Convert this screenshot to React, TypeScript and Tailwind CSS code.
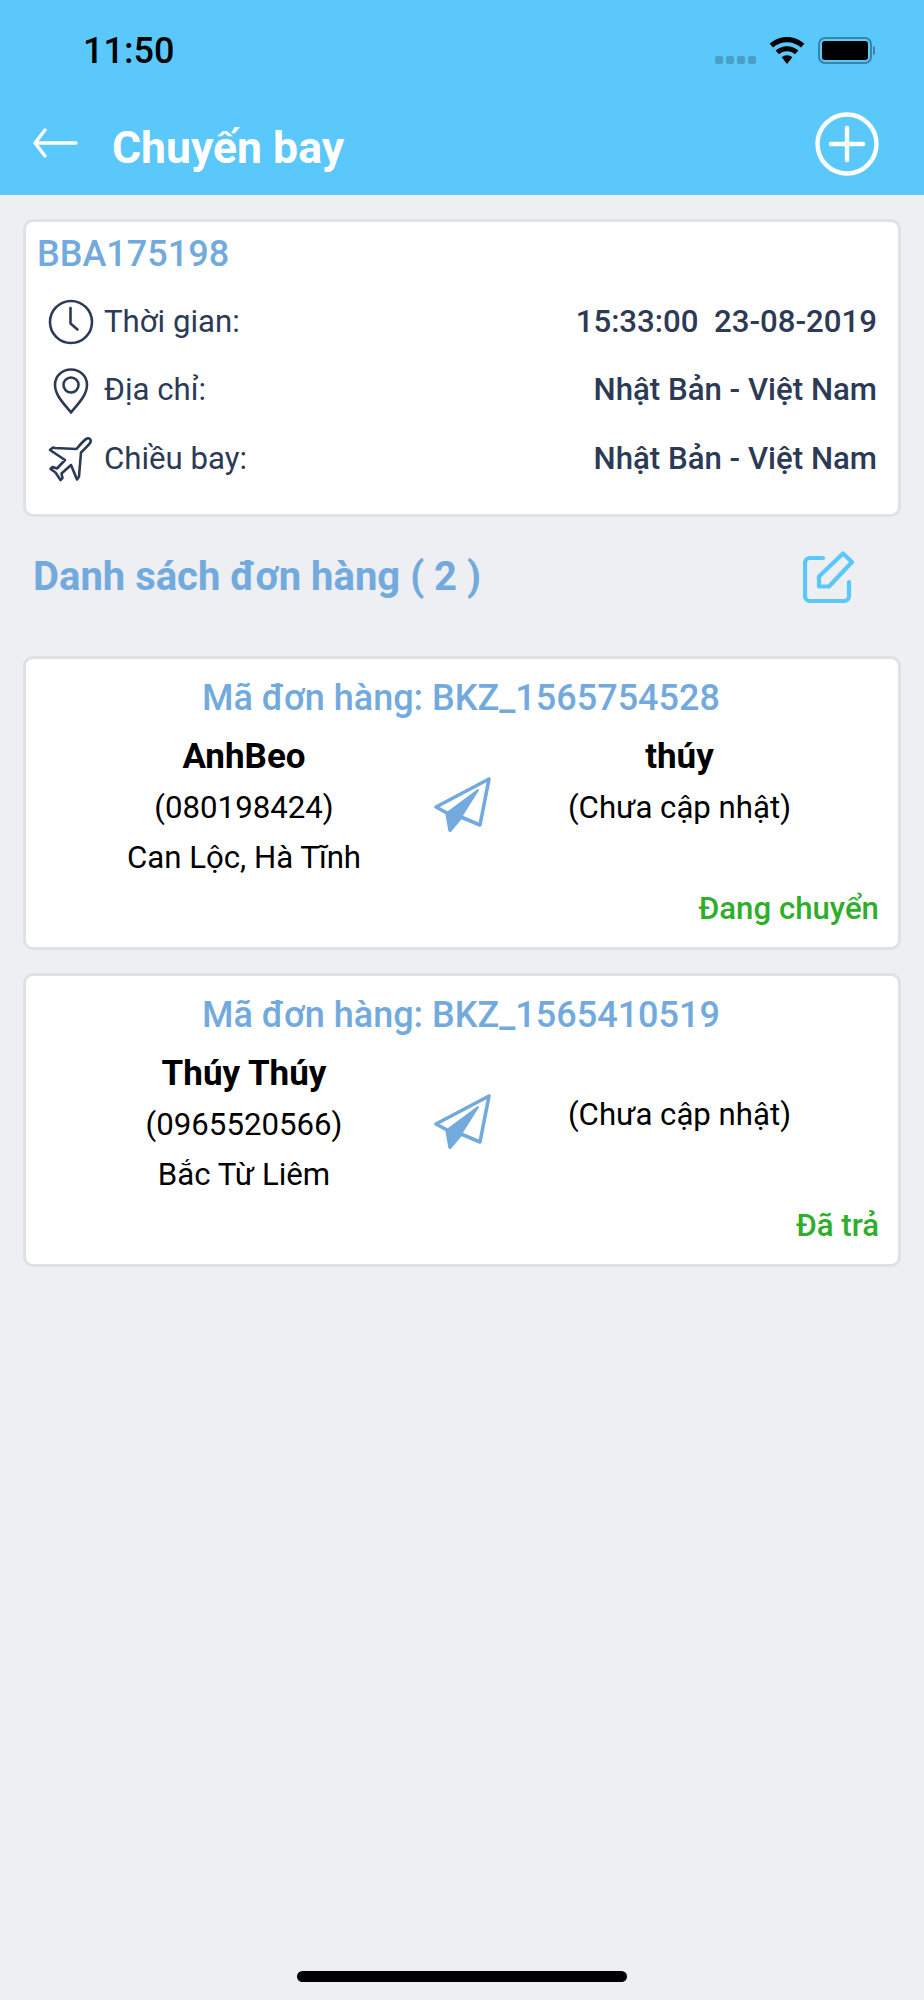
import React from "react";

const Card = ({ children, className = "" }: { children: React.ReactNode; className?: string }) => (
  <div className={`mx-[23px] rounded-[10px] border-[3px] border-[#dfe1e3] bg-white ${className}`}>{children}</div>
);

const Clock = () => (
  <svg width="46" height="46" viewBox="0 0 46 46" fill="none" stroke="#2c3a55" strokeWidth="2.6" strokeLinecap="round" strokeLinejoin="round">
    <circle cx="23" cy="23" r="21" />
    <path d="M22.500 9v15.500l7 6" />
  </svg>
);
const Pin = () => (
  <svg width="46" height="46" viewBox="0 0 46 46" fill="none" stroke="#2c3a55" strokeWidth="2.6" strokeLinejoin="round">
    <path d="M23 44.500 C18 38 7 28 7 17 C7 8 14 1.500 23 1.500 C32 1.500 39 8 39 17 C39 28 28 38 23 44.500Z" />
    <circle cx="23" cy="17" r="7.500" />
  </svg>
);
const Plane = () => (
  <svg width="46" height="46" viewBox="0 0 46 46" fill="none" stroke="#2c3a55" strokeWidth="2.6" strokeLinejoin="round">
    <path d="M39 2.500c2-1 4.500 1 3.600 3.500-.6 1.700-2.800 4-9.600 10.500L31 40.500 29 43.500 23 29 13.500 37.500l1 4.500-2 2-5-7.500-5-3.500 2-2 4.500 1.500L17 24 2 14l3-2.500 2 .5 21.500 1C33 7.500 36.500 3.800 39 2.500Z" />
  </svg>
);
const Send = () => (
  <svg width="60" height="60" viewBox="0 0 60 60" fill="none">
    <path d="M4 31 L57 3 L48 49 L29 41 L18 54 L15 37 Z" stroke="#72aade" strokeWidth="3.600" strokeLinejoin="round" />
    <path d="M15 37 L46 14 L29 41 L18 55 Z" fill="#72aade" stroke="#72aade" strokeWidth="2" strokeLinejoin="round" />
  </svg>
);

const InfoRow = ({ icon, label, value }: { icon: React.ReactNode; label: string; value: string }) => (
  <div className="flex h-[68.5px] items-center pl-[22px] pr-[21px]">
    <div className="flex w-[46px] justify-center">{icon}</div>
    <span className="ml-[10px] text-[31.2px] text-[#2c3a55]">{label}</span>
    <span className="ml-auto whitespace-pre text-[31.2px] font-medium text-[#2c3a55]">{value}</span>
  </div>
);

const Order = ({ code, sender, phone, addr, receiver, status }: { code: string; sender: string; phone: string; addr: string; receiver: string; status: string }) => (
  <Card className="h-[294px] pt-[16px]">
    <div className="pr-[2px] text-center text-[36px] leading-[46px] font-medium text-[#72aade]">Mã đơn hàng: {code}</div>
    <div className="mt-[10px] flex">
      <div className="flex w-[406px] flex-col items-center pl-[30px] text-center">
        <div className="text-[35px] leading-[52px] font-bold text-black">{sender}</div>
        <div className="text-[31.2px] leading-[50px] text-black">{phone}</div>
        <div className="text-[31.2px] leading-[49px] text-black">{addr}</div>
      </div>
      <div className="mt-[45px] flex w-[60px] justify-center"><Send /></div>
      <div className="flex flex-1 flex-col items-center pr-[31px] text-center">
        <div className={`text-[35px] leading-[52px] font-bold text-black ${receiver ? "h-[52px]" : "h-[42px]"}`}>{receiver}</div>
        <div className="text-[31.2px] leading-[50px] text-black">(Chưa cập nhật)</div>
      </div>
    </div>
    <div className="mt-[5px] pr-[19px] text-right text-[31.2px] leading-[44px] font-medium text-[#2fae2c]">{status}</div>
  </Card>
);

export default function App() {
  return (
    <div className="relative h-[2000px] w-[924px] overflow-hidden bg-[#edeff3] font-['Roboto',sans-serif]">
      <header className="h-[195px] bg-[#5ac8fa]">
        <div className="flex h-[100px] items-start justify-between pl-[83px] pr-[49px] pt-[28px]">
          <span className="text-[36px] leading-[46px] font-medium text-black">11:50</span>
          <div className="flex items-center gap-[13px] pt-[9px]">
            <div className="mt-[19px] flex gap-[3px]">
              {[0, 1, 2, 3].map((i) => (
                <span key={i} className="h-[8px] w-[8px] rounded-[2px] bg-[#4a9fc7]" />
              ))}
            </div>
            <svg width="36" height="27" viewBox="0 0 36 28" fill="black">
              <path d="M18 0C11 0 5 2.600 0 7l3.500 4C7.400 7.500 12.500 5.500 18 5.500S28.600 7.500 32.500 11L36 7C31 2.600 25 0 18 0Z" />
              <path d="M18 9.500c-4.700 0-8.700 1.700-11.800 4.500l3.500 4c2.200-2 5.100-3.200 8.300-3.200s6.100 1.200 8.300 3.200l3.500-4c-3.100-2.800-7.100-4.500-11.800-4.500Z" />
              <path d="M18 19c-2.200 0-4.100.8-5.500 2L18 28l5.500-7c-1.400-1.200-3.300-2-5.500-2Z" />
            </svg>
            <div className="flex items-center gap-[1px]">
              <div className="h-[27px] w-[54px] rounded-[7px] border-[2px] border-[#3a84a6] p-[2px]">
                <div className="h-full w-full rounded-[3px] bg-black" />
              </div>
              <div className="h-[9px] w-[2px] rounded-r-[2px] bg-[#3a84a6]" />
            </div>
          </div>
        </div>
        <div className="flex h-[95px] items-center pl-[32px] pr-[45px] pb-[5px]">
          <svg className="mb-[4px]" width="46" height="30" viewBox="0 0 46 30" fill="none" stroke="white" strokeWidth="3.400" strokeLinecap="round" strokeLinejoin="round">
            <path d="M44 15H3M13 2 3 15l10 13" />
          </svg>
          <span className="ml-[34px] mt-[7px] text-[44.500px] font-bold text-white">Chuyến bay</span>
          <svg className="mb-[3px] ml-auto" width="64" height="64" viewBox="0 0 64 64" fill="none" stroke="white" strokeWidth="4.400" strokeLinecap="round">
            <circle cx="32" cy="32" r="29.500" />
            <path d="M32 16v32M16 32h32" />
          </svg>
        </div>
      </header>

      <Card className="mt-[24px] h-[298px]">
        <div className="pl-[11px] pt-[11px] text-[36px] leading-[42px] font-medium text-[#72aade]">BBA175198</div>
        <div className="mt-[13px]">
          <InfoRow icon={<Clock />} label="Thời gian:" value="15:33:00  23-08-2019" />
          <InfoRow icon={<Pin />} label="Địa chỉ:" value="Nhật Bản - Việt Nam" />
          <InfoRow icon={<Plane />} label="Chiều bay:" value="Nhật Bản - Việt Nam" />
        </div>
      </Card>

      <div className="flex h-[139px] items-center pl-[33px] pr-[69px] pb-[19px]">
        <span className="text-[40px] font-bold text-[#72aade]">Danh sách đơn hàng ( 2 )</span>
        <svg className="ml-auto" width="52" height="52" viewBox="0 0 52 52" fill="none" stroke="#5ac8fa" strokeWidth="4.200" strokeLinecap="round" strokeLinejoin="round">
          <path d="M20 7H7a5 5 0 0 0-5 5v33a5 5 0 0 0 5 5h34a5 5 0 0 0 5-5V31" />
          <path d="M40 2.500 49 11 26 35.500H16V25.500Z" />
        </svg>
      </div>

      <div className="flex flex-col gap-[23px]">
        <Order code="BKZ_1565754528" sender="AnhBeo" phone="(080198424)" addr="Can Lộc, Hà Tĩnh" receiver="thúy" status="Đang chuyển" />
        <Order code="BKZ_1565410519" sender="Thúy Thúy" phone="(0965520566)" addr="Bắc Từ Liêm" receiver="" status="Đã trả" />
      </div>

      <div className="absolute bottom-[18px] left-[297px] h-[11px] w-[330px] rounded-full bg-black" />
    </div>
  );
}
